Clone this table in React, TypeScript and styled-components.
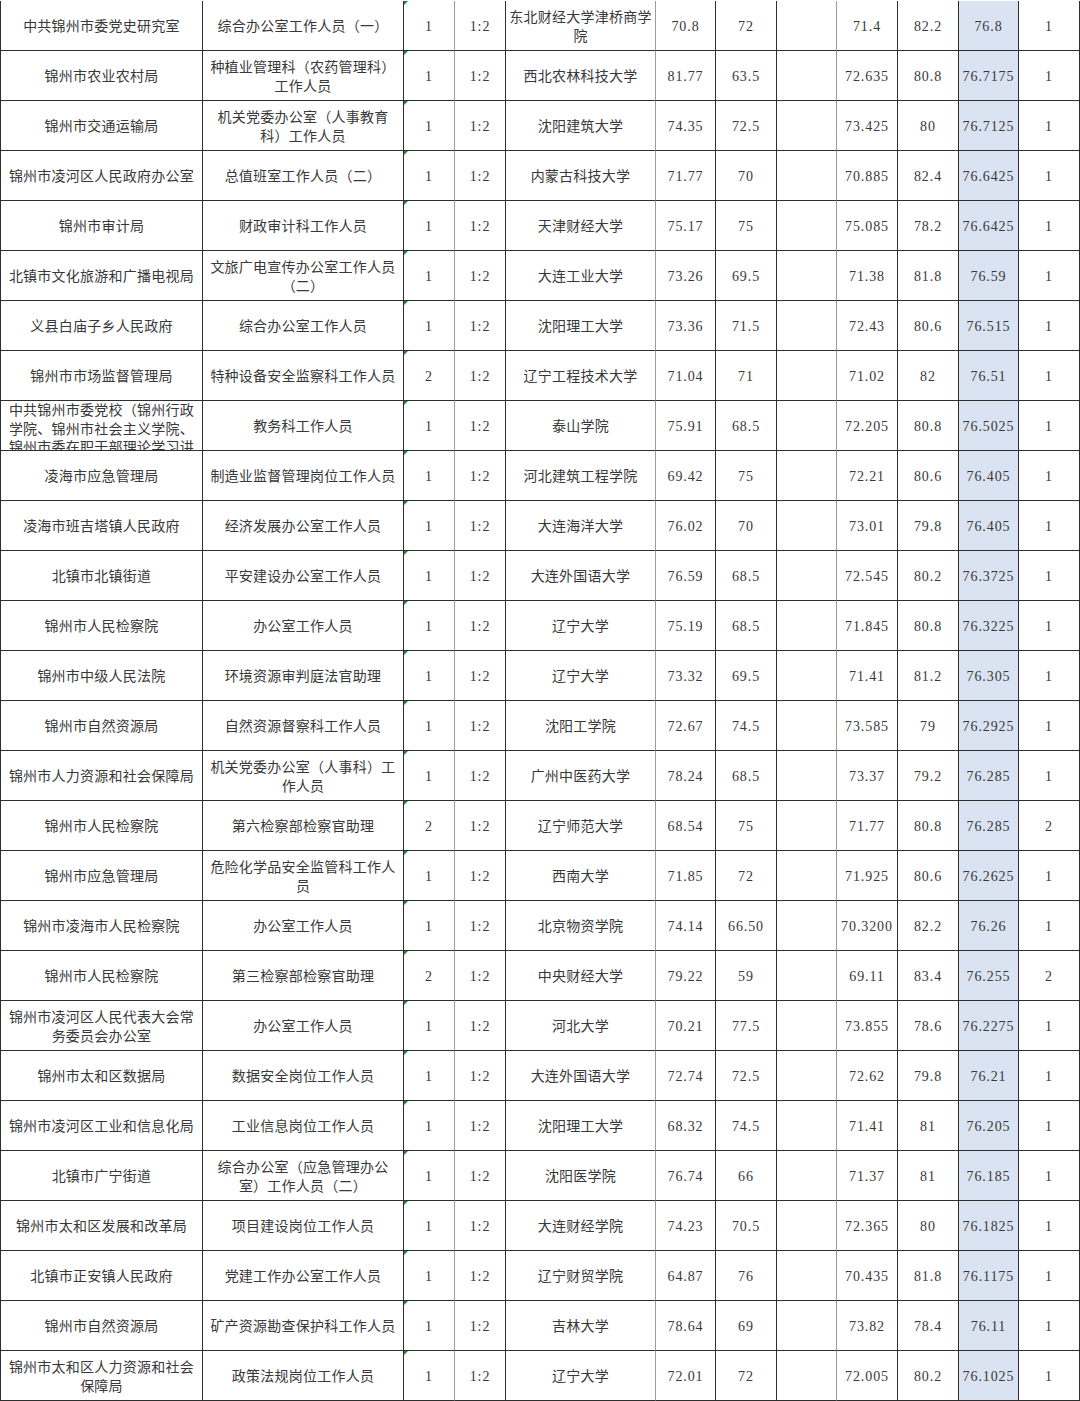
import React from "react";
import styled, { createGlobalStyle, css } from "styled-components";

const GlobalStyle = createGlobalStyle`
  html, body {
    margin: 0;
    padding: 0;
    background: #ffffff;
  }
  body {
    font-family: "Liberation Serif", "Noto Sans CJK SC", serif;
  }
`;

// column widths incl. right border, from the sheet grid
const COLS = [202, 201, 51, 51, 150, 60, 61, 60, 61, 61, 60, 61];
const GRAY_RIGHT = [2, 4, 7];
const SCORE_COL = 10;
const FLAG_COL = 2;

type Row = string[];

const rows: Row[] = [
  ["中共锦州市委党史研究室", "综合办公室工作人员（一）", "1", "1:2", "东北财经大学津桥商学\n院", "70.8", "72", "", "71.4", "82.2", "76.8", "1"],
  ["锦州市农业农村局", "种植业管理科（农药管理科）\n工作人员", "1", "1:2", "西北农林科技大学", "81.77", "63.5", "", "72.635", "80.8", "76.7175", "1"],
  ["锦州市交通运输局", "机关党委办公室（人事教育\n科）工作人员", "1", "1:2", "沈阳建筑大学", "74.35", "72.5", "", "73.425", "80", "76.7125", "1"],
  ["锦州市凌河区人民政府办公室", "总值班室工作人员（二）", "1", "1:2", "内蒙古科技大学", "71.77", "70", "", "70.885", "82.4", "76.6425", "1"],
  ["锦州市审计局", "财政审计科工作人员", "1", "1:2", "天津财经大学", "75.17", "75", "", "75.085", "78.2", "76.6425", "1"],
  ["北镇市文化旅游和广播电视局", "文旅广电宣传办公室工作人员\n（二）", "1", "1:2", "大连工业大学", "73.26", "69.5", "", "71.38", "81.8", "76.59", "1"],
  ["义县白庙子乡人民政府", "综合办公室工作人员", "1", "1:2", "沈阳理工大学", "73.36", "71.5", "", "72.43", "80.6", "76.515", "1"],
  ["锦州市市场监督管理局", "特种设备安全监察科工作人员", "2", "1:2", "辽宁工程技术大学", "71.04", "71", "", "71.02", "82", "76.51", "1"],
  ["中共锦州市委党校（锦州行政\n学院、锦州市社会主义学院、\n锦州市委在职干部理论学习讲", "教务科工作人员", "1", "1:2", "泰山学院", "75.91", "68.5", "", "72.205", "80.8", "76.5025", "1"],
  ["凌海市应急管理局", "制造业监督管理岗位工作人员", "1", "1:2", "河北建筑工程学院", "69.42", "75", "", "72.21", "80.6", "76.405", "1"],
  ["凌海市班吉塔镇人民政府", "经济发展办公室工作人员", "1", "1:2", "大连海洋大学", "76.02", "70", "", "73.01", "79.8", "76.405", "1"],
  ["北镇市北镇街道", "平安建设办公室工作人员", "1", "1:2", "大连外国语大学", "76.59", "68.5", "", "72.545", "80.2", "76.3725", "1"],
  ["锦州市人民检察院", "办公室工作人员", "1", "1:2", "辽宁大学", "75.19", "68.5", "", "71.845", "80.8", "76.3225", "1"],
  ["锦州市中级人民法院", "环境资源审判庭法官助理", "1", "1:2", "辽宁大学", "73.32", "69.5", "", "71.41", "81.2", "76.305", "1"],
  ["锦州市自然资源局", "自然资源督察科工作人员", "1", "1:2", "沈阳工学院", "72.67", "74.5", "", "73.585", "79", "76.2925", "1"],
  ["锦州市人力资源和社会保障局", "机关党委办公室（人事科）工\n作人员", "1", "1:2", "广州中医药大学", "78.24", "68.5", "", "73.37", "79.2", "76.285", "1"],
  ["锦州市人民检察院", "第六检察部检察官助理", "2", "1:2", "辽宁师范大学", "68.54", "75", "", "71.77", "80.8", "76.285", "2"],
  ["锦州市应急管理局", "危险化学品安全监管科工作人\n员", "1", "1:2", "西南大学", "71.85", "72", "", "71.925", "80.6", "76.2625", "1"],
  ["锦州市凌海市人民检察院", "办公室工作人员", "1", "1:2", "北京物资学院", "74.14", "66.50", "", "70.3200", "82.2", "76.26", "1"],
  ["锦州市人民检察院", "第三检察部检察官助理", "2", "1:2", "中央财经大学", "79.22", "59", "", "69.11", "83.4", "76.255", "2"],
  ["锦州市凌河区人民代表大会常\n务委员会办公室", "办公室工作人员", "1", "1:2", "河北大学", "70.21", "77.5", "", "73.855", "78.6", "76.2275", "1"],
  ["锦州市太和区数据局", "数据安全岗位工作人员", "1", "1:2", "大连外国语大学", "72.74", "72.5", "", "72.62", "79.8", "76.21", "1"],
  ["锦州市凌河区工业和信息化局", "工业信息岗位工作人员", "1", "1:2", "沈阳理工大学", "68.32", "74.5", "", "71.41", "81", "76.205", "1"],
  ["北镇市广宁街道", "综合办公室（应急管理办公\n室）工作人员（二）", "1", "1:2", "沈阳医学院", "76.74", "66", "", "71.37", "81", "76.185", "1"],
  ["锦州市太和区发展和改革局", "项目建设岗位工作人员", "1", "1:2", "大连财经学院", "74.23", "70.5", "", "72.365", "80", "76.1825", "1"],
  ["北镇市正安镇人民政府", "党建工作办公室工作人员", "1", "1:2", "辽宁财贸学院", "64.87", "76", "", "70.435", "81.8", "76.1175", "1"],
  ["锦州市自然资源局", "矿产资源勘查保护科工作人员", "1", "1:2", "吉林大学", "78.64", "69", "", "73.82", "78.4", "76.11", "1"],
  ["锦州市太和区人力资源和社会\n保障局", "政策法规岗位工作人员", "1", "1:2", "辽宁大学", "72.01", "72", "", "72.005", "80.2", "76.1025", "1"],
];

const Sheet = styled.div`
  width: 1080px;
  box-sizing: border-box;
  margin-top: 1px;
  border-left: 1px solid #2e2e2e;
  color: #383838;
`;

const SheetRow = styled.div`
  display: grid;
  grid-template-columns: ${COLS.map((w) => `${w}px`).join(" ")};
  height: 50px;
`;

const Cell = styled.div<{
  $grayRight?: boolean;
  $score?: boolean;
  $flag?: boolean;
  $overflow?: boolean;
  $num?: boolean;
}>`
  position: relative;
  box-sizing: border-box;
  height: 50px;
  display: flex;
  align-items: ${(p) => (p.$overflow ? "flex-start" : "center")};
  justify-content: center;
  padding: ${(p) => (p.$overflow ? "1px 4px 0" : "4px 4px 0")};
  overflow: hidden;
  border-right: 1px solid ${(p) => (p.$grayRight ? "#9c9c9c" : "#2e2e2e")};
  border-bottom: 1px solid #2e2e2e;
  background: ${(p) => (p.$score ? "#dae3f1" : "#ffffff")};
  font-size: 14px;
  letter-spacing: ${(p) => (p.$num ? "0.9px" : "0.25px")};
  line-height: 18.5px;
  text-align: center;
  white-space: pre;

  ${(p) =>
    p.$flag &&
    css`
      &::before {
        content: "";
        position: absolute;
        top: 0;
        left: 0;
        border-top: 4px solid #1f8a2e;
        border-right: 4px solid transparent;
      }
    `}
`;

export default function App() {
  return (
    <>
      <GlobalStyle />
      <Sheet>
        {rows.map((row, r) => (
          <SheetRow key={r}>
            {row.map((value, c) => (
              <Cell
                key={c}
                $grayRight={GRAY_RIGHT.includes(c)}
                $score={c === SCORE_COL}
                $flag={c === FLAG_COL}
                $overflow={value.split("\n").length > 2}
                $num={/^[0-9.:]+$/.test(value)}
              >
                {value}
              </Cell>
            ))}
          </SheetRow>
        ))}
      </Sheet>
    </>
  );
}
